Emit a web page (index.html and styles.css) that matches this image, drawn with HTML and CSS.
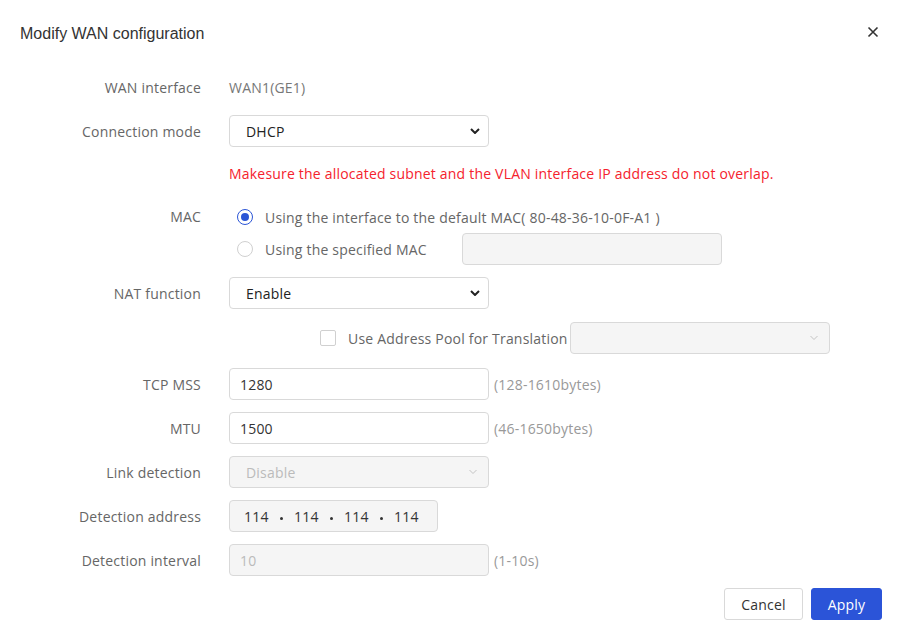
FILE: index.html
```html
<!DOCTYPE html>
<html>
<head>
<meta charset="utf-8">
<link rel="stylesheet" href="styles.css">
</head>
<body>
<div class="dialog">
  <div class="header">
    <div class="title">Modify WAN configuration</div>
    <svg class="close" width="12" height="12" viewBox="0 0 12 12"><path d="M1.5 1.5 L10.5 10.5 M10.5 1.5 L1.5 10.5" stroke="#333" stroke-width="1.6" fill="none"/></svg>
  </div>
  <div class="form">
    <div class="row">
      <div class="label">WAN interface</div>
      <div class="value">WAN1(GE1)</div>
    </div>
    <div class="row">
      <div class="label">Connection mode</div>
      <div class="select"><span>DHCP</span><svg width="10" height="6" viewBox="0 0 10 6"><path d="M1 1 L5 5 L9 1" stroke="#222" stroke-width="2" fill="none"/></svg></div>
    </div>
    <div class="row row-msg">
      <div class="label"></div>
      <div class="msg">Makesure the allocated subnet and the VLAN interface IP address do not overlap.</div>
    </div>
    <div class="row row-top">
      <div class="label label-line">MAC</div>
      <div class="radios">
        <div class="radio-opt"><span class="radio checked"></span><span class="radio-text">Using the interface to the default MAC( 80-48-36-10-0F-A1 )</span></div>
        <div class="radio-opt"><span class="radio"></span><span class="radio-text fixed">Using the specified MAC</span><div class="input disabled"></div></div>
      </div>
    </div>
    <div class="row row-nat">
      <div class="label">NAT function</div>
      <div class="select"><span>Enable</span><svg width="10" height="6" viewBox="0 0 10 6"><path d="M1 1 L5 5 L9 1" stroke="#222" stroke-width="2" fill="none"/></svg></div>
    </div>
    <div class="row row-pool">
      <div class="label"></div>
      <div class="pool">
        <span class="checkbox"></span>
        <span class="pool-text">Use Address Pool for Translation</span>
        <div class="select disabled"><span></span><svg width="10" height="6" viewBox="0 0 10 6"><path d="M1.5 1 L5 4.5 L8.5 1" stroke="#c4c4c4" stroke-width="1" fill="none"/></svg></div>
      </div>
    </div>
    <div class="row">
      <div class="label">TCP MSS</div>
      <div class="input"><span>1280</span></div>
      <div class="hint">(128-1610bytes)</div>
    </div>
    <div class="row">
      <div class="label">MTU</div>
      <div class="input"><span>1500</span></div>
      <div class="hint">(46-1650bytes)</div>
    </div>
    <div class="row">
      <div class="label">Link detection</div>
      <div class="select disabled"><span>Disable</span><svg width="10" height="6" viewBox="0 0 10 6"><path d="M1.5 1 L5 4.5 L8.5 1" stroke="#c4c4c4" stroke-width="1" fill="none"/></svg></div>
    </div>
    <div class="row">
      <div class="label">Detection address</div>
      <div class="ip">
        <span class="seg">114</span><span class="dot"></span>
        <span class="seg">114</span><span class="dot"></span>
        <span class="seg">114</span><span class="dot"></span>
        <span class="seg">114</span>
      </div>
    </div>
    <div class="row">
      <div class="label">Detection interval</div>
      <div class="input disabled"><span>10</span></div>
      <div class="hint">(1-10s)</div>
    </div>
  </div>
  <div class="footer">
    <button class="btn">Cancel</button>
    <button class="btn primary">Apply</button>
  </div>
</div>
</body>
</html>
```
FILE: styles.css
```css
html, body {
  margin: 0;
  padding: 0;
  background: #fff;
}
body {
  font-family: "Open Sans", "Noto Sans", sans-serif;
  font-size: 14px;
  letter-spacing: 0.2px;
  color: #333;
}
.dialog {
  width: 902px;
  height: 639px;
  box-sizing: border-box;
  padding: 0 20px;
}
.header {
  height: 66px;
  display: flex;
  align-items: center;
  justify-content: space-between;
  padding-right: 3px;
  padding-top: 1px;
  box-sizing: border-box;
}
.title {
  font-family: "Liberation Sans", Arial, sans-serif;
  font-size: 16px;
  letter-spacing: 0;
  color: #333;
}
.close {
  margin-top: -3px;
}
.form {
  padding-top: 5px;
}
.row {
  display: flex;
  align-items: center;
  min-height: 32px;
  margin-bottom: 12px;
}
.row-top {
  align-items: flex-start;
}
.row-msg {
  min-height: 28px;
  margin-bottom: 14px;
}
.row-nat {
  margin-bottom: 13px;
}
.row-pool {
  margin-bottom: 14px;
}
.label {
  width: 181px;
  flex: none;
  text-align: right;
  margin-right: 28px;
  color: #666;
}
.label-line {
  line-height: 32px;
}
.value {
  color: #777;
}
.msg {
  color: #f5222d;
}
.select, .input {
  width: 260px;
  height: 32px;
  box-sizing: border-box;
  border: 1px solid #d9d9d9;
  border-radius: 4px;
  background: #fff;
  display: flex;
  align-items: center;
  flex: none;
}
.select {
  justify-content: space-between;
  padding: 0 8px 0 16px;
  color: #222;
}
.input {
  padding: 0 10px;
  color: #333;
}
.select.disabled, .input.disabled {
  background: #f5f5f5;
  color: #bbb;
}
.select.disabled {
  padding-right: 10px;
}
.hint {
  color: #999;
  margin-left: 5px;
}
.radios {
  display: flex;
  flex-direction: column;
}
.radio-opt {
  display: flex;
  align-items: center;
  height: 32px;
}
.radio {
  width: 16px;
  height: 16px;
  box-sizing: border-box;
  border: 1px solid #d0d0d0;
  border-radius: 50%;
  margin-left: 8px;
  margin-right: 12px;
  display: flex;
  align-items: center;
  justify-content: center;
}
.radio.checked {
  border-color: #2b55d6;
}
.radio.checked::after {
  content: "";
  width: 8px;
  height: 8px;
  border-radius: 50%;
  background: #2b55d6;
}
.radio-text {
  color: #666;
}
.radio-text.fixed {
  width: 197px;
}
.pool {
  display: flex;
  align-items: center;
  margin-left: 91px;
}
.checkbox {
  width: 16px;
  height: 16px;
  box-sizing: border-box;
  border: 1px solid #d0d0d0;
  border-radius: 2px;
  margin-right: 12px;
}
.pool-text {
  color: #666;
  width: 222px;
  white-space: nowrap;
}
.ip {
  width: 209px;
  height: 32px;
  box-sizing: border-box;
  border: 1px solid #d9d9d9;
  border-radius: 4px;
  background: #f5f5f5;
  display: flex;
  align-items: center;
  padding-left: 14px;
  color: #333;
}
.seg {
  width: 26px;
}
.dot {
  width: 3px;
  height: 3px;
  background: #333;
  border-radius: 50%;
  margin: 4px 11px 0 10px;
}
.footer {
  display: flex;
  justify-content: flex-end;
  gap: 8px;
}
.btn {
  height: 32px;
  box-sizing: border-box;
  border: 1px solid #d9d9d9;
  border-radius: 3px;
  background: #fff;
  color: #333;
  font-family: "Open Sans", "Noto Sans", sans-serif;
  font-size: 14px;
  letter-spacing: 0.2px;
  padding: 0;
  width: 79px;
}
.btn.primary {
  background: #2b54d8;
  border-color: #2b54d8;
  color: #fff;
  width: 71px;
}
```
